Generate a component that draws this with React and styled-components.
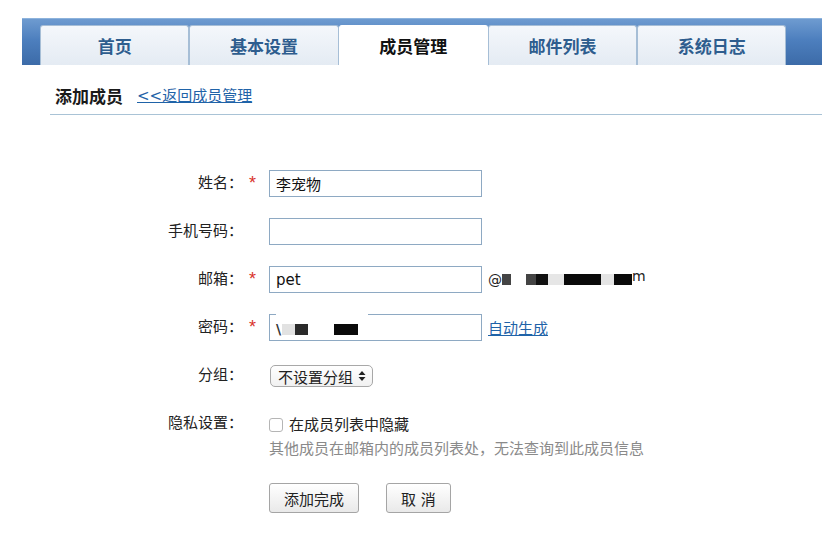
import React from 'react'
import styled, { createGlobalStyle } from 'styled-components'

const GlobalStyle = createGlobalStyle`
  html, body {
    margin: 0;
    padding: 0;
    background: #fff;
  }
  body {
    font-family: "DejaVu Sans", "Noto Sans CJK SC", sans-serif;
    color: #222;
  }
`

const tabs = ['首页', '基本设置', '成员管理', '邮件列表', '系统日志']

const emailBlocks = [
  { w: 9, c: '#444', gap: 0 },
  { w: 10, c: '#444', gap: 15 },
  { w: 12, c: '#111', gap: 0 },
  { w: 16, c: '#e6e6e6', gap: 0 },
  { w: 37, c: '#0a0a0a', gap: 0 },
  { w: 13, c: '#e4e4e4', gap: 0 },
  { w: 18, c: '#0a0a0a', gap: 0 },
]

const App = () => {
  const [active] = React.useState(2)

  return (
    <Page>
      <GlobalStyle />
      <TabBar>
        {tabs.map((t, i) => (
          <Tab key={t} active={i === active}>{t}</Tab>
        ))}
      </TabBar>

      <Header>
        <Title>添加成员</Title>
        <BackLink href="#">&lt;&lt;返回成员管理</BackLink>
      </Header>

      <Form>
        <Row>
          <Label>姓名：</Label>
          <Star>*</Star>
          <Input defaultValue="李宠物" />
        </Row>
        <Row>
          <Label>手机号码：</Label>
          <Star />
          <Input />
        </Row>
        <Row>
          <Label>邮箱：</Label>
          <Star>*</Star>
          <Input defaultValue="pet" />
          <Suffix>
            @
            {emailBlocks.map((b, i) => (
              <Redact key={i} shade={b.c} style={{ width: b.w, marginLeft: b.gap }} />
            ))}
            <span>m</span>
          </Suffix>
        </Row>
        <Row>
          <Label>密码：</Label>
          <Star>*</Star>
          <InputWrap>
            <Input type="text" defaultValue="" />
            <Mask>
              <Slash>\</Slash>
              <Redact shade="#e2e2e2" style={{ width: 13 }} />
              <Redact shade="#2a2a2a" style={{ width: 13 }} />
              <Redact shade="#0a0a0a" style={{ width: 24, marginLeft: 26 }} />
            </Mask>
          </InputWrap>
          <GenLink href="#">自动生成</GenLink>
        </Row>
        <Row>
          <Label>分组：</Label>
          <Star />
          <Select>
            不设置分组
            <svg width="8" height="12" viewBox="0 0 8 12">
              <path d="M4 1 L7.5 5 H0.5 Z" fill="#222" />
              <path d="M4 11 L7.5 7 H0.5 Z" fill="#222" />
            </svg>
          </Select>
        </Row>
        <Row tall>
          <Label>隐私设置：</Label>
          <Star />
          <Field>
            <CheckLine>
              <Check />
              在成员列表中隐藏
            </CheckLine>
            <Hint>其他成员在邮箱内的成员列表处，无法查询到此成员信息</Hint>
          </Field>
        </Row>
        <Row>
          <Label />
          <Star />
          <Buttons>
            <Button pad={14}>添加完成</Button>
            <Button pad={14}>取&nbsp;消</Button>
          </Buttons>
        </Row>
      </Form>
    </Page>
  )
}

export default App

const Page = styled.div`
  width: 829px;
  height: 541px;
  padding-top: 18px;
  box-sizing: border-box;
  overflow: hidden;
`

const TabBar = styled.div`
  margin-left: 22px;
  width: 800px;
  height: 47px;
  box-sizing: border-box;
  padding: 7px 0 0 18px;
  display: flex;
  align-items: flex-end;
  background: linear-gradient(to bottom, #6e9bd0 0%, #4d7fbe 45%, #3c6ba8 100%);
  border-top: 1px solid #8db3dc;
`

const Tab = styled.div`
  width: 149.3px;
  height: 40px;
  box-sizing: border-box;
  display: flex;
  align-items: center;
  justify-content: center;
  font-family: "Noto Sans CJK SC", sans-serif;
  font-size: 17px;
  font-weight: 700;
  color: ${(p) => (p.active ? '#111' : '#2e5d8e')};
  background: ${(p) =>
    p.active ? '#fff' : 'linear-gradient(to bottom, #f4f7fb 0%, #e4ebf3 100%)'};
  border: 1px solid ${(p) => (p.active ? '#fff' : '#a6bed6')};
  border-bottom: none;
  border-radius: 3px 3px 0 0;
`

const Header = styled.div`
  margin: 21px 7px 0 50px;
  padding: 0 0 8px 5px;
  display: flex;
  align-items: center;
  height: 20px;
  border-bottom: 1px solid #a9c3d6;
`

const Title = styled.span`
  font-family: "Noto Sans CJK SC", sans-serif;
  font-size: 17px;
  font-weight: 700;
  color: #1a1a1a;
  line-height: 20px;
`

const BackLink = styled.a`
  margin-left: 14px;
  font-size: 15px;
  color: #1f63a8;
  text-decoration: underline;
  line-height: 20px;
`

const Form = styled.div`
  padding-top: 55px;
  display: flex;
  flex-direction: column;
  gap: 21px;
`

const Row = styled.div`
  display: flex;
  align-items: ${(p) => (p.tall ? 'flex-start' : 'center')};
  min-height: 27px;
`

const Label = styled.div`
  width: 243px;
  flex: none;
  text-align: right;
  font-size: 15px;
  line-height: 27px;
  color: #222;
`

const Star = styled.div`
  width: 26px;
  flex: none;
  box-sizing: border-box;
  padding-left: 6px;
  color: #d9332b;
  font-family: "Liberation Sans", sans-serif;
  font-size: 18px;
  line-height: 27px;
`

const Input = styled.input`
  width: 213px;
  height: 27px;
  box-sizing: border-box;
  border: 1px solid #8ea9c3;
  padding: 0 6px;
  font-family: "DejaVu Sans", "Noto Sans CJK SC", sans-serif;
  font-size: 15px;
  color: #111;
  outline: none;
  background: #fff;
`

const InputWrap = styled.div`
  position: relative;
  width: 213px;
  height: 27px;
`

const Mask = styled.div`
  position: absolute;
  left: 7px;
  top: -1px;
  width: 92px;
  height: 22px;
  background: #fff;
  display: flex;
  align-items: center;
  padding-top: 5px;
`

const Slash = styled.span`
  font-size: 14px;
  font-weight: 700;
  color: #333;
  width: 6px;
  line-height: 12px;
`

const Redact = styled.span`
  display: inline-block;
  height: 11px;
  background: ${(p) => p.shade};
`

const Suffix = styled.div`
  margin-left: 6px;
  display: flex;
  align-items: center;
  font-size: 14px;
  color: #222;

  & > span:last-child {
    align-self: flex-start;
    margin-top: -4px;
    font-size: 14px;
  }
`

const GenLink = styled.a`
  margin-left: 6px;
  font-size: 15px;
  color: #1f63a8;
  text-decoration: underline;
`

const Select = styled.div`
  margin-top: 1px;
  margin-left: 1px;
  height: 22px;
  box-sizing: border-box;
  padding: 0 6px 0 7px;
  display: inline-flex;
  align-items: center;
  gap: 5px;
  border: 1px solid #a8a8a8;
  border-radius: 5px;
  background: linear-gradient(to bottom, #ffffff, #f1f1f1);
  font-size: 15px;
  color: #222;
`

const Field = styled.div`
  display: flex;
  flex-direction: column;
`

const CheckLine = styled.div`
  height: 27px;
  display: flex;
  align-items: center;
  gap: 6px;
  font-size: 15px;
  color: #222;
`

const Check = styled.span`
  width: 14px;
  height: 14px;
  box-sizing: border-box;
  border: 1px solid #b5b5b5;
  border-radius: 3px;
  background: #fff;
  margin-top: 2px;
`

const Hint = styled.div`
  margin-top: 2px;
  font-size: 15px;
  line-height: 20px;
  color: #8a8a8a;
`

const Buttons = styled.div`
  display: flex;
  gap: 27px;
  margin-top: 3px;
`

const Button = styled.button`
  height: 30px;
  box-sizing: border-box;
  padding: 0 ${(p) => p.pad}px;
  border: 1px solid #a5a5a5;
  border-radius: 3px;
  background: linear-gradient(to bottom, #ffffff, #e9e9e9);
  font-family: "DejaVu Sans", "Noto Sans CJK SC", sans-serif;
  font-size: 15px;
  color: #222;
  cursor: pointer;
`
